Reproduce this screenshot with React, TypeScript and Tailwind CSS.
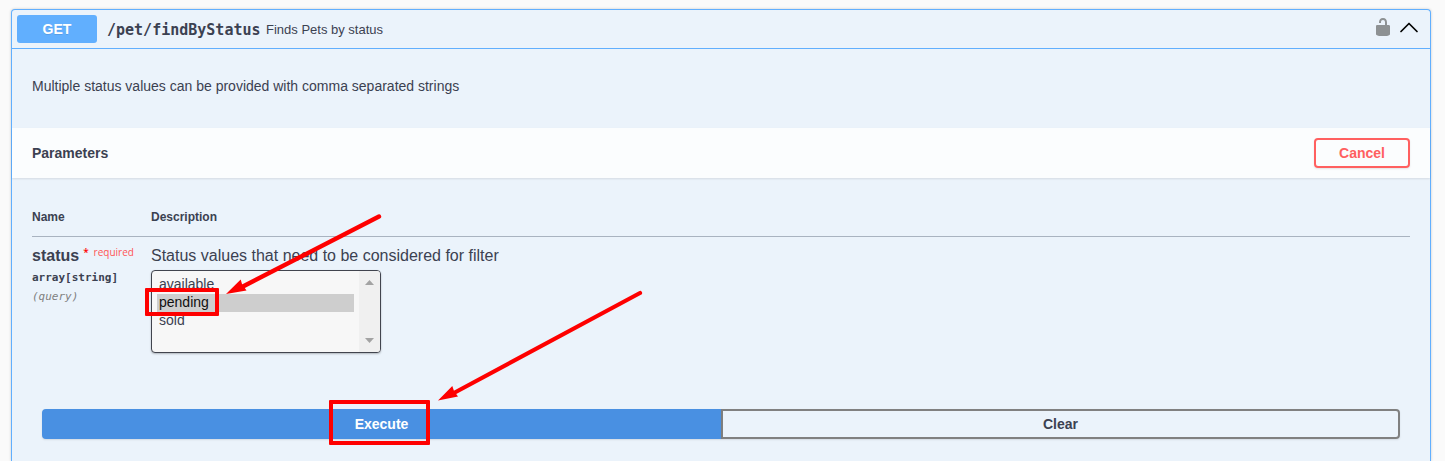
import React from "react";

function UnlockIcon() {
  return (
    <svg viewBox="0 0 20 20" className="h-5 w-5 fill-[#8d9193]" aria-hidden="true">
      <path d="M15.8 8H14V5.6C14 2.703 12.665 1 10 1 7.334 1 6 2.703 6 5.6V6h2v-.801C8 3.754 8.797 3 10 3c1.203 0 2 .754 2 2.199V8H4c-.553 0-1 .646-1 1.199V17c0 .549.428 1.139.951 1.307l1.197.387C5.672 18.861 6.55 19 7.1 19h5.8c.549 0 1.428-.139 1.951-.307l1.196-.387c.524-.167.953-.757.953-1.306V9.199C17 8.646 16.352 8 15.8 8z" />
    </svg>
  );
}

function ChevronUp() {
  return (
    <svg viewBox="0 0 20 20" className="h-5 w-5" aria-hidden="true">
      <path
        d="M2 14.5 L10 6.5 L18 14.5"
        fill="none"
        stroke="#000"
        strokeWidth="1.7"
        strokeLinecap="round"
        strokeLinejoin="round"
      />
    </svg>
  );
}

function Summary() {
  return (
    <div className="flex h-[39px] items-center border-b border-[#61affe] px-[5px]">
      <span className="flex h-7 w-20 items-center justify-center rounded-[3px] bg-[#61affe] text-sm font-bold text-white [text-shadow:0_1px_0_rgba(0,0,0,0.1)]">
        GET
      </span>
      <span className="w-[159px] pt-[2px] pl-[10px] font-['DejaVu_Sans_Mono',monospace] text-[15px] font-bold whitespace-nowrap">
        /pet/findByStatus
      </span>
      <span className="pt-[2px] pl-[10px] text-[13px]">Finds Pets by status</span>
      <div className="ml-auto flex items-center gap-[6px] pr-[6px]">
        <button type="button" aria-label="Authorize" className="pb-1">
          <UnlockIcon />
        </button>
        <button type="button" aria-label="Collapse operation" className="pb-1">
          <ChevronUp />
        </button>
      </div>
    </div>
  );
}

function StatusSelect() {
  return (
    <div className="relative mt-1 flex h-[83px] w-[230px] rounded-[4px] border border-[#41444e] bg-[#f7f7f7] shadow-[0_1px_2px_0_rgba(0,0,0,0.25)]">
      <select
        multiple
        size={4}
        aria-label="status"
        defaultValue={["pending"]}
        className="h-full min-w-0 flex-1 appearance-none overflow-hidden bg-transparent px-[5px] pt-[5px] pb-[3px] text-sm text-[#3b4151] outline-none"
      >
        <option className="h-[18px] px-[2px] leading-[18px]" value="available">available</option>
        <option className="h-[18px] px-[2px] leading-[18px]" value="pending">pending</option>
        <option className="h-[18px] px-[2px] leading-[18px]" value="sold">sold</option>
      </select>
      <div className="flex w-[21px] flex-col items-center justify-between rounded-r-[3px] bg-[#f0f0f0] py-[9px]">
        <svg viewBox="0 0 9 5" className="h-[5px] w-[9px] fill-[#a3a3a3]" aria-hidden="true">
          <path d="M0 5 L4.5 0 L9 5 Z" />
        </svg>
        <svg viewBox="0 0 9 5" className="h-[5px] w-[9px] fill-[#a3a3a3]" aria-hidden="true">
          <path d="M0 0 L4.5 5 L9 0 Z" />
        </svg>
      </div>
      <div className="pointer-events-none absolute top-[17px] -left-[7px] h-7 w-[74px] rounded-[1px] border-4 border-[#fe0000]" />
      <svg
        viewBox="0 0 160 90"
        className="pointer-events-none absolute -top-[61px] left-[72px] h-[90px] w-[160px]"
        aria-hidden="true"
      >
        <path d="M155 6.5 L17 77.5" stroke="#fe0000" strokeWidth="4.4" strokeLinecap="round" />
        <path d="M2 84 L16.7 69.5 L18 74 L22.5 80.5 Z" fill="#fe0000" />
      </svg>
    </div>
  );
}

function Parameters() {
  return (
    <div className="px-5 pt-5">
      <table className="w-full border-collapse text-left">
        <thead>
          <tr className="border-b border-[#a9b3c0]">
            <th className="h-[38px] w-[119px] pt-[1px] text-xs font-bold">Name</th>
            <th className="h-[38px] pt-[1px] text-xs font-bold">Description</th>
          </tr>
        </thead>
        <tbody>
          <tr className="align-top">
            <td className="pt-[9px]">
              <div className="flex h-5 items-center text-base font-bold whitespace-nowrap">
                status
                <span className="pb-[7px] pl-1 font-['Open_Sans',sans-serif] text-[10px] font-semibold text-[#ff0000]">
                  *
                </span>
                <span className="pb-[7px] pl-[5px] font-['Open_Sans',sans-serif] text-[10px] font-medium text-[#ff5555]">
                  required
                </span>
              </div>
              <div className="pt-1 font-['DejaVu_Sans_Mono',monospace] text-[11px] leading-4 font-bold">
                array[string]
              </div>
              <div className="pt-[3px] font-['DejaVu_Sans_Mono',monospace] text-[11px] leading-4 text-[#808080] italic">
                (query)
              </div>
            </td>
            <td className="pt-[9px]">
              <p className="text-base leading-5">Status values that need to be considered for filter</p>
              <StatusSelect />
            </td>
          </tr>
        </tbody>
      </table>
    </div>
  );
}

function Actions() {
  return (
    <div className="flex px-[30px] pt-14 pb-[22px]">
      <button
        type="button"
        className="relative h-[30px] flex-1 rounded-l-[4px] border-2 border-[#4990e2] bg-[#4990e2] text-sm font-bold text-white shadow-[0_1px_2px_rgba(0,0,0,0.1)]"
      >
        Execute
        <span className="pointer-events-none absolute -top-[11px] left-1/2 h-[45px] w-[101px] -translate-x-[53px] rounded-[1px] border-4 border-[#fe0000]" />
        <svg
          viewBox="0 0 210 120"
          className="pointer-events-none absolute -top-[124px] left-1/2 ml-[54px] h-[120px] w-[210px]"
          aria-hidden="true"
        >
          <path d="M204 6 L16 107" stroke="#fe0000" strokeWidth="4.2" strokeLinecap="round" />
          <path d="M2 113.5 L16.3 99 L18 104 L22 109.5 Z" fill="#fe0000" />
        </svg>
      </button>
      <button
        type="button"
        className="h-[30px] flex-1 rounded-r-[4px] border-2 border-[#808080] text-sm font-bold shadow-[0_1px_2px_rgba(0,0,0,0.1)]"
      >
        Clear
      </button>
    </div>
  );
}

export default function App() {
  return (
    <main className="flex min-h-screen flex-col bg-[#fafafa] pt-[9px] pr-[14px] pl-[11px] font-['Liberation_Sans',sans-serif] text-[#3b4151]">
      <section className="flex-1 rounded-t-[4px] border border-b-0 border-[#61affe] bg-[#ebf3fb] shadow-[0_0_3px_rgba(0,0,0,0.19)]">
        <Summary />
        <p className="px-5 pt-[27px] pb-8 text-sm">Multiple status values can be provided with comma separated strings</p>
        <div className="flex h-[50px] items-center justify-between bg-white/80 px-5 shadow-[0_1px_2px_rgba(0,0,0,0.1)]">
          <h4 className="text-sm font-bold">Parameters</h4>
          <button
            type="button"
            className="h-[30px] w-24 rounded-[4px] border-2 border-[#ff6060] text-sm font-bold text-[#ff6060] shadow-[0_1px_2px_rgba(0,0,0,0.1)]"
          >
            Cancel
          </button>
        </div>
        <Parameters />
        <Actions />
      </section>
    </main>
  );
}
